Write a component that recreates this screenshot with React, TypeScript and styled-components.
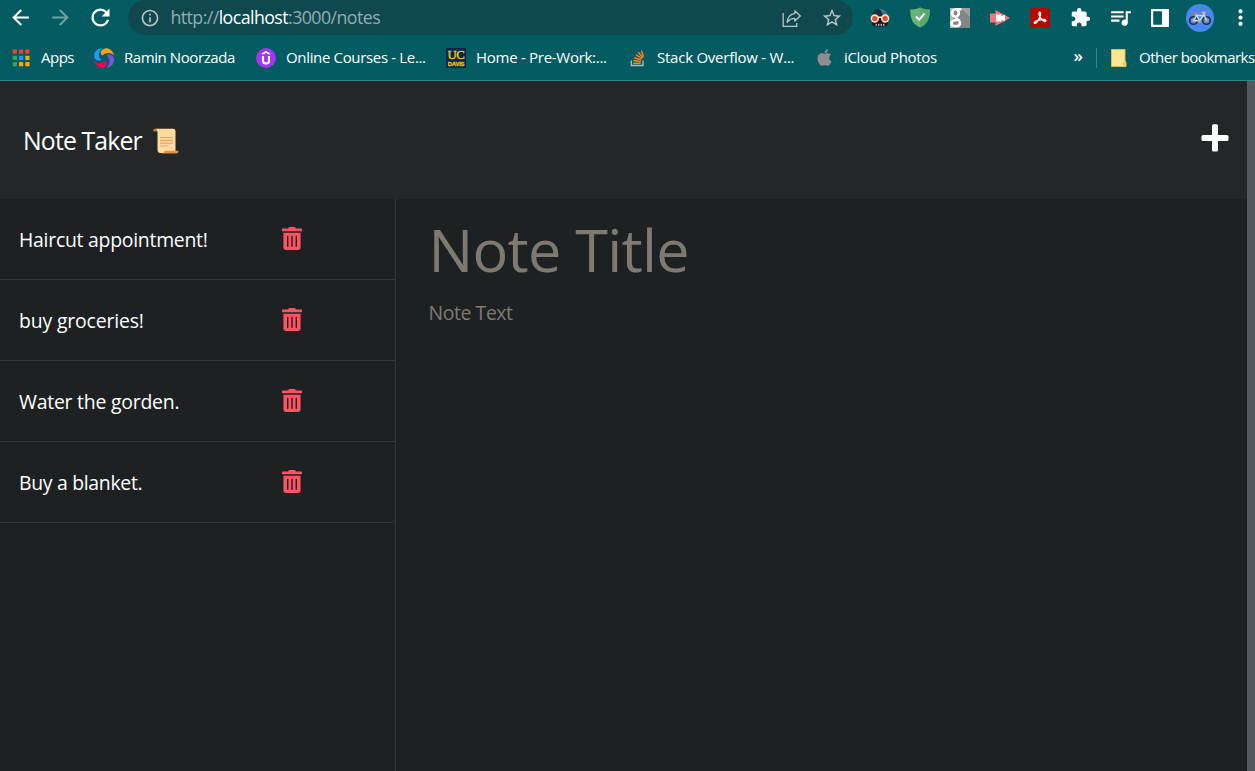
import React from "react";
import styled, { createGlobalStyle, css } from "styled-components";
import {
  MdArrowBack,
  MdArrowForward,
  MdRefresh,
  MdInfoOutline,
  MdStarBorder,
  MdExtension,
  MdQueueMusic,
  MdMoreVert,
} from "react-icons/md";
import { FaTrashAlt, FaApple } from "react-icons/fa";

const colors = {
  chrome: "#045b62",
  omnibox: "#0f484e",
  chromeLine: "#3b8287",
  header: "#232728",
  page: "#1e2122",
  line: "#343637",
  muted: "#7e7a72",
  danger: "#ff5263",
  scrollbar: "#53595c",
};

const GlobalStyle = createGlobalStyle`
  * { box-sizing: border-box; }
  body {
    margin: 0;
    overflow: hidden;
    background: ${colors.page};
    color: #fff;
    font-family: "Open Sans", "Noto Sans", sans-serif;
  }
  svg { display: block; flex: none; }
`;

const Window = styled.div`
  display: flex;
  flex-direction: column;
  width: 1255px;
  height: 771px;
  overflow: hidden;
`;

const Chrome = styled.header`
  flex: none;
  height: 81px;
  background: ${colors.chrome};
  border-bottom: 1px solid ${colors.chromeLine};
`;

const Toolbar = styled.div`
  display: flex;
  height: 35px;
`;

const ToolButton = styled.span<{ $dim?: boolean }>`
  display: flex;
  flex: none;
  align-items: center;
  justify-content: center;
  width: 40px;
  height: 35px;
  color: ${(p) => (p.$dim ? "#6ba0a4" : "#fff")};
`;

const Extensions = styled.div`
  display: flex;
`;

const Omnibox = styled.div`
  display: flex;
  flex: none;
  align-items: center;
  width: 725px;
  height: 35px;
  margin: 0 7px 0 8px;
  padding: 0 12px;
  border-radius: 17.5px;
  background: ${colors.omnibox};
  color: #b8c4c6;
`;

const Url = styled.span`
  flex: 1;
  margin-left: 10.5px;
  font-size: 17.8px;
  letter-spacing: -0.57px;
  line-height: 33px;
  color: #92aeb1;
  white-space: nowrap;
`;

const Host = styled.span`
  color: #fff;
`;

const OmniAction = styled.span`
  display: flex;
  justify-content: center;
  width: 40px;
  & + & { margin-right: -10.5px; }
`;

const BookmarksBar = styled.nav`
  display: flex;
  align-items: center;
  height: 45px;
  padding-left: 11px;
`;

const Bookmark = styled.span<{ $width?: number; $spacing: number }>`
  display: flex;
  flex: none;
  align-items: center;
  gap: 10px;
  ${(p) => p.$width && css`width: ${p.$width}px;`}
  font-size: 15px;
  letter-spacing: ${(p) => p.$spacing}px;
  line-height: 20px;
  white-space: nowrap;
`;

const BookmarkLabel = styled.span`
  margin-top: -2px;
`;

const Overflow = styled.span`
  margin: -4px 13px 0 auto;
  font-size: 17px;
  font-weight: 600;
  line-height: 20px;
`;

const Divider = styled.span`
  flex: none;
  width: 1px;
  height: 20px;
  margin-right: 14px;
  background: #3b8287;
`;

const Viewport = styled.div`
  display: flex;
  flex: 1;
  min-height: 0;
`;

const NotesApp = styled.div`
  display: flex;
  flex: 1;
  flex-direction: column;
`;

const Scrollbar = styled.div`
  width: 8px;
  background: ${colors.scrollbar};
`;

const AppHeader = styled.div`
  display: flex;
  flex: none;
  align-items: center;
  justify-content: space-between;
  height: 118px;
  padding: 0 18px 0 23px;
  background: ${colors.header};
`;

const Brand = styled.h1`
  display: flex;
  align-items: center;
  gap: 11px;
  margin: 0;
  font-size: 24.8px;
  font-weight: 400;
  letter-spacing: -0.85px;
  line-height: 36px;
`;

const BrandIcon = styled.span`
  display: flex;
  margin-top: 2px;
`;

const AddButton = styled.span`
  display: flex;
  margin-top: -5px;
`;

const Columns = styled.main`
  display: flex;
  flex: 1;
  min-height: 0;
`;

const Sidebar = styled.ul`
  flex: none;
  width: 396px;
  margin: 0;
  padding: 0;
  list-style: none;
  border-right: 1px solid ${colors.line};
`;

const NoteRow = styled.li`
  display: flex;
  align-items: center;
  height: 81px;
  padding-left: 19px;
  border-bottom: 1px solid ${colors.line};
  &:last-child { border-bottom-right-radius: 5px; }
`;

const NoteName = styled.span<{ $spacing: number }>`
  width: 263px;
  padding-top: 2px;
  font-size: 19.4px;
  letter-spacing: ${(p) => p.$spacing}px;
  line-height: 26px;
  white-space: nowrap;
`;

const Trash = styled(FaTrashAlt)`
  color: ${colors.danger};
  width: 20px;
  height: 23px;
  margin-top: -1px;
`;

const Editor = styled.section`
  display: flex;
  flex: 1;
  flex-direction: column;
  padding: 8px 0 0 32.5px;
  color: ${colors.muted};
`;

const TitleField = styled.div`
  font-size: 59.4px;
  letter-spacing: -0.72px;
  line-height: 84px;
  white-space: nowrap;
`;

const TextField = styled.div`
  margin-top: 8px;
  font-size: 19.4px;
  letter-spacing: -0.4px;
  line-height: 28px;
`;

const notes = [
  { text: "Haircut appointment!", spacing: -0.25 },
  { text: "buy groceries!", spacing: -0.15 },
  { text: "Water the gorden.", spacing: -0.22 },
  { text: "Buy a blanket.", spacing: -0.3 },
];

const ShareIcon = () => (
  <svg width="20" height="20" viewBox="0 0 20 20" fill="none" stroke="currentColor" strokeWidth="1.3">
    <path d="M1.2 5V18.3H14.8V15" />
    <path d="M12.8 2.8L18.3 8L12.8 13V10.3C9.5 10.3 7 11.5 5.2 14.5C5.6 9.8 8.2 6 12.8 5.6Z" strokeLinejoin="round" />
  </svg>
);

const ReaderIcon = () => (
  <svg width="20" height="20" viewBox="0 0 20 20">
    <path d="M2 10C2 3.5 5.500.5 10 .5s8 3 8 9.500Z" fill="#17303f" />
    <path d="M8.500.5C14.500.5 18 3.500 18 9h-5C12.500 5 11 2.500 8.500.5Z" fill="#35788a" />
    <path d="M2 9h16v6q0 3.500-4 3.500H6Q2 18.500 2 15Z" fill="#111b23" />
    <path d="M5.500 15.800h9v2h-9Z" fill="#b9b3b5" />
    <path d="M7.500 15v3M10 15v3M12.500 15v3" stroke="#111b23" strokeWidth="1" />
    <circle cx="4.800" cy="10.500" r="3.400" fill="#d9502f" stroke="#fbd9c9" strokeWidth="1.600" />
    <circle cx="15.200" cy="10.500" r="3.400" fill="#d9502f" stroke="#fbd9c9" strokeWidth="1.600" />
    <path d="M7.800 9.300h4.400" stroke="#fbd9c9" strokeWidth="1.600" />
  </svg>
);

const ShieldIcon = () => (
  <svg width="20" height="21" viewBox="0 0 20 21">
    <path d="M10 .5C7 2 3.500 2.500.3 2.500C.2 11 2 17 10 20.500C18 17 19.800 11 19.700 2.500C16.500 2.500 13 2 10 .5Z" fill="#67b279" />
    <path d="M10 .5C13 2 16.500 2.500 19.700 2.500C19.800 11 18 17 10 20.500Z" fill="#5ba86b" />
    <path d="M6 9.500L9.200 12.800L14.500 6.500" fill="none" stroke="#fff" strokeWidth="2" />
  </svg>
);

const GIcon = () => (
  <svg width="20" height="20" viewBox="0 0 20 20">
    <path d="M0 0h20v20H0Z" fill="#858585" />
    <path d="M11 0h9v9Z" fill="#a0a0a0" />
    <path d="M0 0h3v20H0Z" fill="#b9b9b9" />
    <g fill="none" stroke="#fff" strokeWidth="2.600">
      <ellipse cx="5.500" cy="5" rx="3.300" ry="3.700" />
      <path d="M6 1.300h5.500M7 8.500c-3 2 3 3 3 6.200c0 4.500-8.500 4.500-8.500.8c0-2.500 2.500-3.500 5.500-3.500" />
    </g>
  </svg>
);

const ArrowCamIcon = () => (
  <svg width="20" height="18" viewBox="0 0 20 18">
    <path d="M0 4.500h5.500V1l14.500 8L5.500 17v-3.500H0Z" fill="#f8737a" />
    <path d="M6 5.500h5.500v2l3.500-2v7l-3.500-2v2H6Z" fill="#fff" />
  </svg>
);

const AcrobatIcon = () => (
  <svg width="20" height="20" viewBox="0 0 20 20">
    <rect width="20" height="20" rx="3.500" fill="#b30b00" />
    <path
      d="M9.700 4.300c1.500 0 .8 3.500-.4 5.900c-1.300 2.700-3.500 5.600-4.700 5c-1.700-1 2.700-3 6-3.500c2.600-.5 5.600-.2 5.200 1c-.5 1.500-3.600-.5-5-2.300c-1.700-2.100-2.500-6-1.100-6.100Z"
      fill="none" stroke="#fff" strokeWidth="1.400"
    />
  </svg>
);

const PanelIcon = () => (
  <svg width="18" height="18" viewBox="0 0 18 18">
    <path fillRule="evenodd" d="M0 0h18v18H0ZM2.200 2.200v13.600h8.800V2.200Z" fill="#fff" />
  </svg>
);

const BikeAvatar = () => (
  <svg width="28" height="28" viewBox="0 0 28 28" fill="none">
    <circle cx="14" cy="14" r="14" fill="#4688f1" />
    <circle cx="7.500" cy="16.500" r="3.800" fill="#5b8fd0" stroke="#2d2c3c" strokeWidth="1.600" />
    <circle cx="20.500" cy="16.500" r="3.800" fill="#5b8fd0" stroke="#2d2c3c" strokeWidth="1.600" />
    <path d="M7.500 16.500L10.500 11.500h7l-4 5.500ZM10 10l3.500 7M20.500 16.500L17.500 9" stroke="#c6ddec" strokeWidth="1.400" />
    <path d="M7 9.500h4.500" stroke="#e0705c" strokeWidth="1.800" />
    <path d="M15.500 8.500h4.500" stroke="#f2a285" strokeWidth="1.600" />
    <circle cx="13.500" cy="17.500" r="1.500" fill="#d79a75" />
    <circle cx="7.500" cy="16.500" r="1" fill="#e0b089" />
    <circle cx="20.500" cy="16.500" r="1" fill="#e0b089" />
  </svg>
);

const AppsIcon = () => {
  const fills = ["#ea4335", "#ea4335", "#ea4335", "#34a853", "#2196f3", "#fbab04", "#34a853", "#fbab04", "#fbab04"];
  return (
    <svg width="20" height="20" viewBox="0 0 20 20">
      {fills.map((fill, i) => (
        <rect key={i} x={1.7 + (i % 3) * 6.3} y={1.5 + Math.floor(i / 3) * 6.3} width="4.2" height="4.2" fill={fill} />
      ))}
    </svg>
  );
};

const SwirlIcon = () => (
  <svg width="20" height="20" viewBox="0 0 20 20">
    <path d="M8.500.2C2 0-1.500 6 1 10.800C2.500 13 5 13.300 7.300 12C4 8.500 4 4 8.500.2Z" fill="#1b9cf0" />
    <path d="M6.800 4C9-1.500 17.500-1 20 7C16.500 4.300 12 4 8.500 7.500C7 6.500 6.500 5.200 6.800 4Z" fill="#f9a01b" />
    <path d="M12.500 7C17 5.500 20.500 8 20 12.500C19.500 17 16.500 19.500 12.500 20C16.500 15.500 16 10.500 12.500 7Z" fill="#8250df" />
    <path d="M0 12.800C4 16 8.500 15.500 11.500 12.500C14 15 12.500 18.700 9.800 19.700C5 20.500.5 17.500 0 12.800Z" fill="#f50057" />
  </svg>
);

const UdemyIcon = () => (
  <svg width="20" height="20" viewBox="0 0 20 20">
    <circle cx="10" cy="10" r="10" fill="#a435f0" />
    <path d="M6.200 6L10 3.900L13.800 6" fill="none" stroke="#fff" strokeWidth="1.700" />
    <path d="M7 8v4.700q0 2.800 3 2.800t3-2.800V8" fill="none" stroke="#fff" strokeWidth="2.100" />
  </svg>
);

const DavisIcon = () => (
  <svg width="20" height="20" viewBox="0 0 20 20">
    <rect width="20" height="20" fill="#022851" />
    <g fill="#e8c20c">
      <text x="1.500" y="11" fontFamily="Liberation Serif, serif" fontSize="12.500" stroke="#e8c20c" strokeWidth=".5" textLength="17" lengthAdjust="spacingAndGlyphs">UC</text>
      <text x="1.800" y="17.500" fontFamily="Liberation Sans, sans-serif" fontSize="6" fontWeight="700" stroke="#e8c20c" strokeWidth=".3" textLength="16.500" lengthAdjust="spacingAndGlyphs">DAVIS</text>
    </g>
  </svg>
);

const StackIcon = () => (
  <svg width="20" height="20" viewBox="0 0 20 20" fill="none">
    <path d="M4.300 12.500v5h11.700v-5" stroke="#bcbbbb" strokeWidth="1.300" />
    <path d="M6.200 15.300h7.500M6.400 12.500l7.400 1M7.200 9.700l7 2.200M8.800 6.700l6.200 3.900M11.300 4.300l4.700 5.400M14.400 2.700l2.200 6" stroke="#f48024" strokeWidth="1.500" />
  </svg>
);

const FolderIcon = () => (
  <svg width="18" height="20" viewBox="0 0 18 20">
    <path d="M.5 1.500H14v12l1 .5v4.500H.5Z" fill="#ffe694" stroke="#e2bd4e" />
    <path d="M12 18.500v-4l2-1.500l1 1v4.500Z" fill="#f3cd58" />
  </svg>
);

const ScrollIcon = () => (
  <svg width="26" height="26" viewBox="0 0 26 26">
    <path d="M0 2.500C0 1 1 .7 3.500.7h2v2.800H2Q0 3.500 0 2.500Z" fill="#b87b3f" />
    <path d="M3 .7h17q2.500 0 2.500 2.500v20.300q0 1.500-2 1.500H7.500q-3 0-3-3V4Q4.500 1.500 3 .7Z" fill="#ffdba0" />
    <path d="M8.500 25.500H23q2.500 0 2.500-2.700h-14q0 2.700-4 2.700Z" fill="#dd9340" />
    <path d="M7 9.500h13M7 12.300h13M7 15.200h13M7 18h8.500" stroke="#e6a55f" strokeWidth="1.200" />
  </svg>
);

const PlusIcon = () => (
  <svg width="28" height="28" viewBox="0 0 28 28" fill="#fff">
    <rect x="0.500" y="11" width="27" height="6" rx="1.500" />
    <rect x="11" y="0.300" width="6" height="27.200" rx="1.500" />
  </svg>
);

export default function App() {
  return (
    <>
      <GlobalStyle />
      <Window>
        <Chrome>
          <Toolbar>
            <ToolButton><MdArrowBack size={25} /></ToolButton>
            <ToolButton $dim><MdArrowForward size={25} /></ToolButton>
            <ToolButton><MdRefresh size={27} /></ToolButton>
            <Omnibox>
              <MdInfoOutline size={20} />
              <Url>http://<Host>localhost</Host>:3000/notes</Url>
              <OmniAction><ShareIcon /></OmniAction>
              <OmniAction><MdStarBorder size={22} /></OmniAction>
            </Omnibox>
            <Extensions>
              <ToolButton><ReaderIcon /></ToolButton>
              <ToolButton><ShieldIcon /></ToolButton>
              <ToolButton><GIcon /></ToolButton>
              <ToolButton><ArrowCamIcon /></ToolButton>
              <ToolButton><AcrobatIcon /></ToolButton>
              <ToolButton><MdExtension size={21} /></ToolButton>
              <ToolButton><MdQueueMusic size={25} /></ToolButton>
              <ToolButton><PanelIcon /></ToolButton>
              <ToolButton><BikeAvatar /></ToolButton>
              <ToolButton><MdMoreVert size={25} /></ToolButton>
            </Extensions>
          </Toolbar>
          <BookmarksBar>
            <Bookmark $width={83} $spacing={-0.5}><AppsIcon /><BookmarkLabel>Apps</BookmarkLabel></Bookmark>
            <Bookmark $width={162} $spacing={-0.42}><SwirlIcon /><BookmarkLabel>Ramin Noorzada</BookmarkLabel></Bookmark>
            <Bookmark $width={190} $spacing={-0.34}><UdemyIcon /><BookmarkLabel>Online Courses - Le...</BookmarkLabel></Bookmark>
            <Bookmark $width={181} $spacing={-0.28}><DavisIcon /><BookmarkLabel>Home - Pre-Work:...</BookmarkLabel></Bookmark>
            <Bookmark $width={188} $spacing={-0.24}><StackIcon /><BookmarkLabel>Stack Overflow - W...</BookmarkLabel></Bookmark>
            <Bookmark $spacing={-0.33}><FaApple size={19} color="#8e8e8e" /><BookmarkLabel>iCloud Photos</BookmarkLabel></Bookmark>
            <Overflow>»</Overflow>
            <Divider />
            <Bookmark $width={144} $spacing={-0.5}><FolderIcon /><BookmarkLabel>Other bookmarks</BookmarkLabel></Bookmark>
          </BookmarksBar>
        </Chrome>
        <Viewport>
          <NotesApp>
            <AppHeader>
              <Brand>Note Taker<BrandIcon><ScrollIcon /></BrandIcon></Brand>
              <AddButton><PlusIcon /></AddButton>
            </AppHeader>
            <Columns>
              <Sidebar>
                {notes.map((note) => (
                  <NoteRow key={note.text}>
                    <NoteName $spacing={note.spacing}>{note.text}</NoteName>
                    <Trash />
                  </NoteRow>
                ))}
              </Sidebar>
              <Editor>
                <TitleField>Note Title</TitleField>
                <TextField>Note Text</TextField>
              </Editor>
            </Columns>
          </NotesApp>
          <Scrollbar />
        </Viewport>
      </Window>
    </>
  );
}
